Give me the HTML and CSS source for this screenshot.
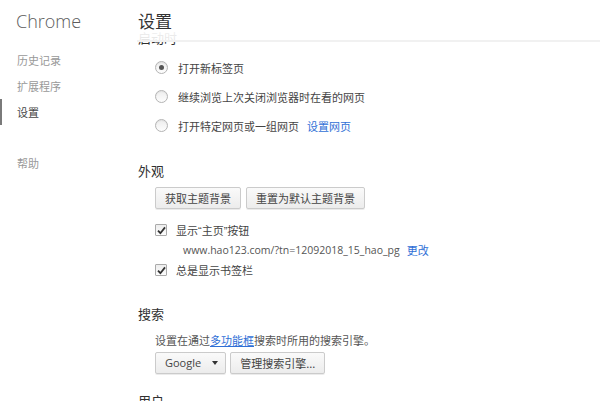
FILE: index.html
```html
<!DOCTYPE html>
<html lang="zh-CN">
<head>
<meta charset="utf-8">
<title>设置</title>
<link rel="stylesheet" href="styles.css">
</head>
<body>
<div class="page">
  <nav class="sidebar">
    <div class="brand">Chrome</div>
    <ul class="nav">
      <li class="nav-item">历史记录</li>
      <li class="nav-item">扩展程序</li>
      <li class="nav-item active">设置</li>
      <li class="nav-item help">帮助</li>
    </ul>
  </nav>
  <main class="main">
    <header class="topbar"><h1 class="title">设置</h1></header>

    <section class="section startup">
      <h3 class="heading">启动时</h3>
      <div class="option"><span class="radio checked"></span><span>打开新标签页</span></div>
      <div class="option"><span class="radio"></span><span>继续浏览上次关闭浏览器时在看的网页</span></div>
      <div class="option"><span class="radio"></span><span>打开特定网页或一组网页</span><a class="link pages-link">设置网页</a></div>
    </section>

    <section class="section appearance">
      <h3 class="heading">外观</h3>
      <div class="btn-row">
        <button class="btn">获取主题背景</button>
        <button class="btn">重置为默认主题背景</button>
      </div>
      <div class="check-row"><span class="checkbox"><svg width="9" height="9" viewBox="0 0 9 9"><path d="M1 4.6 L3.4 7.2 L8 1.4" fill="none" stroke="#333" stroke-width="1.8"/></svg></span><span>显示<span class="q">“</span>主页<span class="q">”</span>按钮</span></div>
      <div class="url-row"><span class="url">www.hao123.com/?tn=12092018_15_hao_pg</span><a class="link">更改</a></div>
      <div class="check-row"><span class="checkbox"><svg width="9" height="9" viewBox="0 0 9 9"><path d="M1 4.6 L3.4 7.2 L8 1.4" fill="none" stroke="#333" stroke-width="1.8"/></svg></span><span>总是显示书签栏</span></div>
    </section>

    <section class="section search">
      <h3 class="heading">搜索</h3>
      <p class="desc">设置在通过<a class="link underline">多功能框</a>搜索时所用的搜索引擎。</p>
      <div class="btn-row tight">
        <button class="btn select">Google<span class="arrow"></span></button>
        <button class="btn">管理搜索引擎...</button>
      </div>
    </section>

    <section class="section users">
      <h3 class="heading">用户</h3>
    </section>
  </main>
</div>
</body>
</html>
```

FILE: styles.css
```css
html, body {
  margin: 0;
  padding: 0;
  background: #fff;
  overflow: hidden;
  height: 401px;
}
body {
  font-family: "Noto Sans CJK SC", "Noto Sans", sans-serif;
  color: #444;
  font-size: 11px;
}
.page {
  display: flex;
  height: 401px;
}
.sidebar {
  width: 137px;
  flex: none;
}
.brand {
  font-family: "Open Sans", "Noto Sans", sans-serif;
  font-weight: 300;
  font-size: 18px;
  color: #5c5c5c;
  padding: 9px 0 0 16px;
  line-height: 24px;
  height: 24px;
}
.nav {
  list-style: none;
  margin: 14px 0 0;
  padding: 0;
}
.nav-item {
  height: 26px;
  line-height: 26px;
  padding-left: 17px;
  color: #999;
  font-size: 11px;
  border-left: 2px solid transparent;
  margin-left: -2px;
}
.nav-item.active {
  color: #464646;
  border-left-color: #7a7a7a;
  margin-left: 0;
  padding-left: 15px;
}
.nav-item.help {
  margin-top: 25px;
}
.main {
  position: relative;
  flex: 1;
  padding-top: 30px;
}
.topbar {
  position: absolute;
  top: 0;
  left: 0;
  right: 0;
  height: 40px;
  background: linear-gradient(#fff, #fff 40%, rgba(255,255,255,0.88));
  border-bottom: 2px solid #f1f1f1;
  z-index: 2;
}
.title {
  margin: 0;
  font-size: 17px;
  font-weight: normal;
  color: #333;
  line-height: 24px;
  padding-top: 9px;
  padding-left: 1px;
}
.heading {
  margin: 0;
  font-size: 13px;
  font-weight: normal;
  color: #303030;
  height: 16px;
  line-height: 16px;
  padding-left: 1px;
}
.startup .heading { margin-bottom: 7px; }
.option {
  display: flex;
  align-items: center;
  height: 29px;
  padding-left: 18px;
  color: #444;
}
.radio {
  width: 11px;
  height: 11px;
  border: 1px solid #b4b4b4;
  border-radius: 50%;
  background: linear-gradient(#ededed, #fdfdfd);
  box-shadow: inset 0 1px 1px rgba(0,0,0,0.06);
  margin-right: 10px;
  flex: none;
  display: flex;
  align-items: center;
  justify-content: center;
}
.radio.checked::after {
  content: "";
  width: 5px;
  height: 5px;
  border-radius: 50%;
  background: #555;
}
.link {
  color: #2f6fd6;
  cursor: pointer;
}
.pages-link { margin-left: 8px; }
.appearance { margin-top: 23px; }
.btn-row {
  display: flex;
  gap: 5px;
  padding-left: 18px;
  margin-top: 8px;
  margin-bottom: 11px;
}
.btn-row.tight { margin-top: 4px; margin-bottom: 0; gap: 4px; }
.btn {
  font-family: "Noto Sans CJK SC", "Noto Sans", sans-serif;
  font-size: 11px;
  color: #444;
  height: 22px;
  padding: 0 9px;
  border: 1px solid #cbcbcb;
  border-radius: 2px;
  background: linear-gradient(#fafafa, #ececec);
  box-shadow: 0 1px 0 rgba(0,0,0,0.08);
  display: flex;
  align-items: center;
  line-height: 20px;
}
.check-row {
  display: flex;
  align-items: center;
  height: 20px;
  padding-left: 18px;
}
.q {
  font-family: "Liberation Sans", sans-serif;
}
.checkbox {
  width: 10px;
  height: 10px;
  border: 1px solid #aaa;
  border-radius: 1px;
  background: linear-gradient(#ededed, #fdfdfd);
  margin-right: 9px;
  display: flex;
  align-items: center;
  justify-content: center;
  flex: none;
}
.url-row {
  display: flex;
  align-items: center;
  height: 20px;
  padding-left: 46px;
}
.url {
  font-family: "Open Sans", "Noto Sans", sans-serif;
  font-size: 10.5px;
  color: #555;
  margin-right: 7px;
}
.search { margin-top: 26px; }
.desc {
  margin: 10px 0 0;
  padding-left: 18px;
  line-height: 16px;
  height: 16px;
  color: #555;
}
.underline { text-decoration: underline; }
.select {
  font-family: "Open Sans", "Noto Sans", sans-serif;
  padding: 0 7px 0 9px;
}
.arrow {
  width: 0;
  height: 0;
  border-left: 3.5px solid transparent;
  border-right: 3.5px solid transparent;
  border-top: 4px solid #333;
  margin-left: 11px;
}
.users { margin-top: 19px; }
```
